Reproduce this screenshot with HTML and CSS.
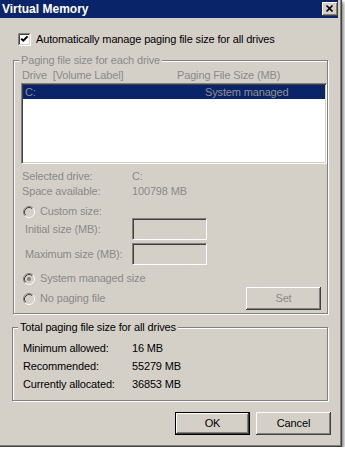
FILE: index.html
```html
<!DOCTYPE html>
<html>
<head>
<meta charset="utf-8">
<link rel="stylesheet" href="styles.css">
</head>
<body>
<div class="window">
  <div class="titlebar">
    <span class="title">Virtual Memory</span>
    <span class="close"><svg width="16" height="14" viewBox="0 0 16 14"><path d="M4.5 3.5 L10.5 9.5 M10.5 3.5 L4.5 9.5" stroke="#000" stroke-width="1.7" fill="none"/></svg></span>
  </div>

  <div class="check-row">
    <svg class="checkbox" width="13" height="13" viewBox="0 0 13 13">
      <rect x="0" y="0" width="13" height="13" fill="#fff"/>
      <path d="M0.5 12.5 V0.5 H12.5" stroke="#808080" fill="none"/>
      <path d="M1.5 11.5 V1.5 H11.5" stroke="#404040" fill="none"/>
      <path d="M0.5 12.5 H12.5 V0.5" stroke="#fff" fill="none"/>
      <path d="M1.5 11.5 H11.5 V1.5" stroke="#d4d0c8" fill="none"/>
      <path d="M3.2 5.6 L5.3 7.7 L9.6 3.4" stroke="#000" stroke-width="2" fill="none"/>
    </svg>
    <span>Automatically manage paging file size for all drives</span>
  </div>

  <div class="group group-drives">
    <div class="group-title disabled">Paging file size for each drive</div>
    <div class="list-head disabled"><span class="head-col1">Drive&nbsp; [Volume Label]</span><span>Paging File Size (MB)</span></div>
    <div class="listbox">
      <div class="list-row"><span class="row-col1">C:</span><span>System managed</span></div>
    </div>
    <div class="info disabled">
      <span>Selected drive:</span><span>C:</span>
      <span>Space available:</span><span>100798 MB</span>
    </div>
    <div class="radio-row radio-custom disabled">
      <svg class="radio" width="12" height="12" viewBox="0 0 12 12">
        <circle cx="6" cy="6" r="4" fill="#d4d0c8"/>
        <path d="M2.11 9.89 A5.5 5.5 0 0 1 9.89 2.11" stroke="#808080" fill="none"/>
        <path d="M9.89 2.11 A5.5 5.5 0 0 1 2.11 9.89" stroke="#fff" fill="none"/>
        <path d="M2.82 9.18 A4.5 4.5 0 0 1 9.18 2.82" stroke="#404040" fill="none"/>
        <path d="M9.18 2.82 A4.5 4.5 0 0 1 2.82 9.18" stroke="#d4d0c8" fill="none"/>
      </svg>
      <span>Custom size:</span>
    </div>
    <div class="field-row disabled"><span class="field-label">Initial size (MB):</span><span class="input"></span></div>
    <div class="field-row disabled"><span class="field-label">Maximum size (MB):</span><span class="input"></span></div>
    <div class="radio-row radio-system disabled">
      <svg class="radio" width="12" height="12" viewBox="0 0 12 12">
        <circle cx="6" cy="6" r="4" fill="#d4d0c8"/>
        <path d="M2.11 9.89 A5.5 5.5 0 0 1 9.89 2.11" stroke="#808080" fill="none"/>
        <path d="M9.89 2.11 A5.5 5.5 0 0 1 2.11 9.89" stroke="#fff" fill="none"/>
        <path d="M2.82 9.18 A4.5 4.5 0 0 1 9.18 2.82" stroke="#404040" fill="none"/>
        <path d="M9.18 2.82 A4.5 4.5 0 0 1 2.82 9.18" stroke="#d4d0c8" fill="none"/>
        <circle cx="6" cy="6" r="2" fill="#808080"/>
      </svg>
      <span>System managed size</span>
    </div>
    <div class="last-row">
      <div class="radio-row disabled">
        <svg class="radio" width="12" height="12" viewBox="0 0 12 12">
          <circle cx="6" cy="6" r="4" fill="#d4d0c8"/>
          <path d="M2.11 9.89 A5.5 5.5 0 0 1 9.89 2.11" stroke="#808080" fill="none"/>
          <path d="M9.89 2.11 A5.5 5.5 0 0 1 2.11 9.89" stroke="#fff" fill="none"/>
          <path d="M2.82 9.18 A4.5 4.5 0 0 1 9.18 2.82" stroke="#404040" fill="none"/>
          <path d="M9.18 2.82 A4.5 4.5 0 0 1 2.82 9.18" stroke="#d4d0c8" fill="none"/>
        </svg>
        <span>No paging file</span>
      </div>
      <button class="btn disabled">Set</button>
    </div>
  </div>

  <div class="group group-totals">
    <div class="group-title">Total paging file size for all drives</div>
    <div class="totals">
      <span>Minimum allowed:</span><span>16 MB</span>
      <span>Recommended:</span><span>55279 MB</span>
      <span>Currently allocated:</span><span>36853 MB</span>
    </div>
  </div>

  <div class="buttons">
    <button class="btn btn-default">OK</button>
    <button class="btn">Cancel</button>
  </div>
</div>
</body>
</html>
```

FILE: styles.css
```css
body {
  margin: 0;
  background: #fff;
  font-family: "Liberation Sans", Arial, sans-serif;
  font-size: 11px;
  line-height: 13px;
  letter-spacing: -0.15px;
  color: #000;
}

.window {
  width: 342px;
  height: 447px;
  box-sizing: border-box;
  background: #d4d0c8;
  border-right: 1px solid #404040;
  border-bottom: 1px solid #404040;
  box-shadow: inset -1px -1px 0 #808080, 2px 2px 3px rgba(0, 0, 0, 0.45);
  display: flex;
  flex-direction: column;
}

.titlebar {
  width: 338px;
  height: 18px;
  box-sizing: border-box;
  background: #0a246a;
  color: #fff;
  font-weight: bold;
  font-size: 12px;
  letter-spacing: 0;
  padding-left: 2px;
  display: flex;
  align-items: center;
  justify-content: space-between;
  flex-shrink: 0;
}

.close {
  width: 16px;
  height: 14px;
  background: #d4d0c8;
  box-shadow: inset -1px -1px 0 #404040, inset 1px 1px 0 #fff, inset -2px -2px 0 #808080;
  display: flex;
}

.disabled {
  color: #8a8a8a;
}

.check-row {
  display: flex;
  align-items: center;
  gap: 5px;
  height: 13px;
  margin-top: 15px;
  padding-left: 18px;
}

.checkbox, .radio {
  display: block;
  flex-shrink: 0;
}

.group {
  position: relative;
  box-sizing: border-box;
  border: 1px solid #808080;
  box-shadow: inset 1px 1px 0 #fff, 1px 1px 0 #fff;
  flex-shrink: 0;
}

.group-title {
  position: absolute;
  top: -7px;
  left: 5px;
  padding: 0 2px;
  background: #d4d0c8;
  line-height: 13px;
  white-space: nowrap;
}

.group-drives {
  width: 315px;
  height: 254px;
  margin: 14px 0 0 13px;
  padding: 8px 0 0 7px;
}

.list-head {
  display: flex;
  height: 13px;
  padding-left: 1px;
  white-space: nowrap;
}

.head-col1 {
  width: 155px;
}

.listbox {
  width: 306px;
  height: 81px;
  box-sizing: border-box;
  margin-top: 1px;
  background: #fff;
  border: 1px solid;
  border-color: #808080 #fff #fff #808080;
  box-shadow: inset 1px 1px 0 #404040, inset -1px -1px 0 #d4d0c8;
  padding: 1px;
}

.list-row {
  display: flex;
  height: 14px;
  line-height: 14px;
  background: #0a246a;
  color: #909090;
  padding-left: 2px;
}

.row-col1 {
  width: 180px;
}

.info {
  display: grid;
  grid-template-columns: 110px auto;
  line-height: 15px;
  margin-top: 5px;
  padding-left: 1px;
}

.radio-row {
  display: flex;
  align-items: center;
  gap: 5px;
  height: 13px;
  padding-left: 2px;
}

.radio-custom {
  margin-top: 6px;
}

.radio-system {
  margin-top: 7px;
}

.field-row {
  display: flex;
  align-items: center;
  height: 22px;
  padding-left: 4px;
}

.field-row + .field-row {
  margin-top: 3px;
}

.field-label {
  width: 107px;
}

.input {
  width: 75px;
  height: 22px;
  box-sizing: border-box;
  border: 1px solid;
  border-color: #808080 #fff #fff #808080;
  box-shadow: inset 1px 1px 0 #404040, inset -1px -1px 0 #d4d0c8;
}

.last-row {
  display: flex;
  align-items: center;
  justify-content: space-between;
  height: 23px;
  margin-top: 2px;
  padding-right: 6px;
}

.last-row .radio-row {
  padding-left: 2px;
}

.btn {
  width: 75px;
  height: 23px;
  box-sizing: border-box;
  padding: 0;
  margin: 0;
  border: none;
  background: #d4d0c8;
  font: inherit;
  letter-spacing: inherit;
  display: flex;
  align-items: center;
  justify-content: center;
  box-shadow: inset -1px -1px 0 #404040, inset 1px 1px 0 #fff, inset -2px -2px 0 #808080;
}

.btn.disabled {
  color: #8a8a8a;
}

.btn-default {
  border: 1px solid #000;
  color: #000;
}

.group-totals {
  width: 316px;
  height: 74px;
  margin: 13px 0 0 12px;
  padding: 11px 0 0 10px;
}

.totals {
  display: grid;
  grid-template-columns: 109px auto;
  line-height: 18px;
}

.buttons {
  display: flex;
  justify-content: flex-end;
  gap: 6px;
  margin-top: 11px;
  padding-right: 10px;
}
```
